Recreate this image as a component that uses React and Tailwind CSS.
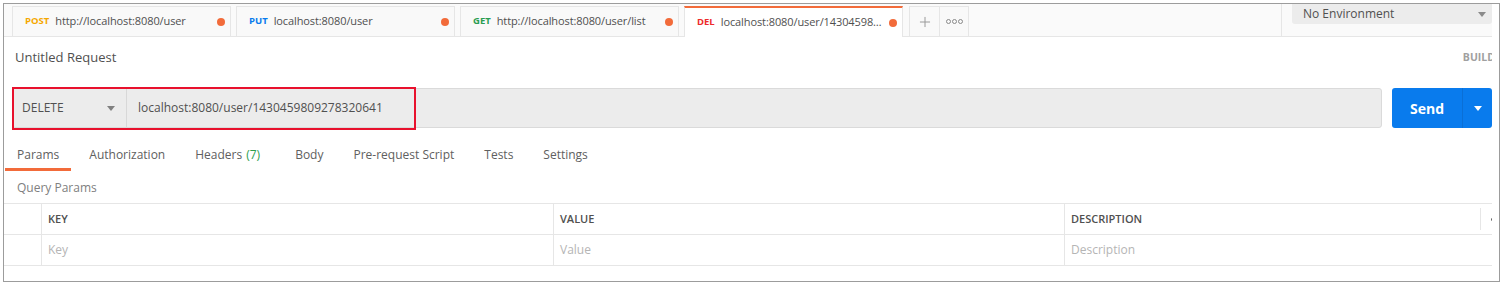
import { Plus } from 'lucide-react';

const tabs = [
  { method: 'POST', color: 'text-[#f5a800]', url: 'http://localhost:8080/user' },
  { method: 'PUT', color: 'text-[#097bed]', url: 'localhost:8080/user' },
  { method: 'GET', color: 'text-[#2a9d52]', url: 'http://localhost:8080/user/list' },
  { method: 'DEL', color: 'text-[#ed2b2b]', url: 'localhost:8080/user/1430459809278320641', active: true },
];

const reqTabs = ['Params', 'Authorization', 'Headers', 'Body', 'Pre-request Script', 'Tests', 'Settings'];

const Caret = ({ className = '' }) => (
  <svg width="8" height="5" viewBox="0 0 8 5" className={className}>
    <path d="M0 0 L8 0 L4 5 Z" fill="currentColor" />
  </svg>
);

const RequestTab = ({ tab }) => (
  <div
    className={`w-[219px] flex items-center pl-[12px] pr-[5px] border-x border-[#e6e6e6] ${
      tab.active
        ? 'h-[31px] -mb-px bg-white border-t-2 border-t-[#f26b3a]'
        : 'h-[30px] bg-[#f9f9f9] border-t'
    }`}
  >
    <span className={`mr-[6px] text-[9.5px] font-bold ${tab.color}`}>{tab.method}</span>
    <span className="flex-1 truncate text-[11px] tracking-[-0.1px] text-[#505050]">{tab.url}</span>
    <span className="ml-[2px] w-[8px] h-[8px] rounded-full bg-[#f26b3a] shrink-0" />
  </div>
);

export default function App() {
  return (
    <div className="w-[1504px] h-[284px] bg-white pt-[3px] pl-[3px]" style={{ fontFamily: '"Open Sans", sans-serif' }}>
      <div className="w-[1497px] h-[279px] border border-[#9c9c9c]">
        <div className="w-[1488px] h-full overflow-hidden">
          {/* Tab bar */}
          <div className="h-[33px] bg-[#fafafa] border-b border-[#e6e6e6] flex items-end pl-[8px]">
            <div className="flex items-end gap-[5px]">
              {tabs.map((t) => (
                <RequestTab key={t.method} tab={t} />
              ))}
            </div>
            <div className="ml-[6px] h-[30px] flex border border-b-0 border-[#e6e6e6] bg-[#f9f9f9]">
              <div className="w-[30px] flex items-center justify-center border-r border-[#e6e6e6] text-[#9a9a9a]">
                <Plus size={16} strokeWidth={1.5} />
              </div>
              <div className="w-[28px] flex items-center justify-center gap-[1px]">
                {[0, 1, 2].map((i) => (
                  <span key={i} className="w-[5px] h-[5px] rounded-full border border-[#8a8a8a]" />
                ))}
              </div>
            </div>
            <div className="ml-auto self-stretch border-l border-[#e6e6e6] pl-[10px]">
              <div className="w-[200px] h-[20px] bg-[#ececec] rounded-b-[3px] flex items-center justify-between pl-[11px] pr-[6px]">
                <span className="text-[12px] text-[#505050]">No Environment</span>
                <Caret className="text-[#8a8a8a]" />
              </div>
            </div>
          </div>

          {/* Title */}
          <div className="h-[41px] pt-[1px] flex items-center pl-[11px]">
            <span className="text-[13px] text-[#505050]">Untitled Request</span>
            <span className="ml-auto -mr-[3px] text-[10.5px] font-bold text-[#a0a0a0] shrink-0">BUILD</span>
          </div>

          {/* Request row */}
          <div className="mt-[10px] h-[40px] flex gap-[10px] pl-[8px]">
            <div className="relative flex-1 flex bg-[#ececec] border border-[#dadada] rounded-[3px]">
              <div className="w-[114px] flex items-center justify-between pl-[9px] pr-[11px] border-r border-[#d8d8d8]">
                <span className="text-[12px] text-[#505050]">DELETE</span>
                <Caret className="text-[#808080]" />
              </div>
              <div className="flex items-center pl-[11px] text-[12px] text-[#505050]">
                localhost:8080/user/1430459809278320641
              </div>
              <div className="absolute left-[-1px] top-[-2px] w-[404px] h-[43px] border-2 border-[#e8112d]" />
            </div>
            <div className="w-[100px] flex bg-[#097bed] rounded-[3px] text-white">
              <div className="w-[70px] flex items-center justify-center text-[14px] font-bold">Send</div>
              <div className="flex-1 flex items-center justify-center border-l border-[#0a6fd6]">
                <Caret />
              </div>
            </div>
          </div>

          {/* Request tabs */}
          <div className="mt-[11px] flex gap-[6px] pl-[1px]">
            {reqTabs.map((t, i) => (
              <div
                key={t}
                className={`h-[32px] pl-[12px] pt-[3px] flex items-center text-[12px] text-[#606060] border-b-[3px] ${
                  i === 0 ? 'border-[#f26b3a] text-[#303030]' : 'border-transparent'
                } ${t === 'Headers' ? 'pr-[17px]' : 'pr-[12px]'}`}
              >
                {t}
                {t === 'Headers' && <span className="ml-[4px] text-[#2fa04f]">(7)</span>}
              </div>
            ))}
          </div>

          {/* Query params */}
          <div className="h-[32px] pt-[1px] flex items-center pl-[13px] text-[12px] text-[#808080]">Query Params</div>

          <div className="w-[1489px] text-[11px]">
            <div className="h-[32px] flex border-y border-[#e6e6e6] font-semibold text-[#505050]">
              <div className="w-[37px]" />
              <div className="w-[512px] border-l border-[#e6e6e6] flex items-center pl-[6px]">KEY</div>
              <div className="w-[511px] border-l border-[#e6e6e6] flex items-center pl-[6px]">VALUE</div>
              <div className="flex-1 border-l border-[#e6e6e6] flex items-center pl-[6px]">
                DESCRIPTION
                <div className="ml-auto h-[22px] border-l border-[#e6e6e6] w-[13px] flex items-center justify-end">
                  <span className="w-[3px] h-[3px] rounded-full bg-[#606060] -mr-[1px]" />
                </div>
              </div>
            </div>
            <div className="h-[31px] flex border-b border-[#e6e6e6] text-[12px] text-[#b5b5b5]">
              <div className="w-[37px]" />
              <div className="w-[512px] border-l border-[#e6e6e6] flex items-center pl-[6px]">Key</div>
              <div className="w-[511px] border-l border-[#e6e6e6] flex items-center pl-[6px]">Value</div>
              <div className="flex-1 border-l border-[#e6e6e6] flex items-center pl-[6px]">Description</div>
            </div>
          </div>
        </div>
      </div>
    </div>
  );
}
